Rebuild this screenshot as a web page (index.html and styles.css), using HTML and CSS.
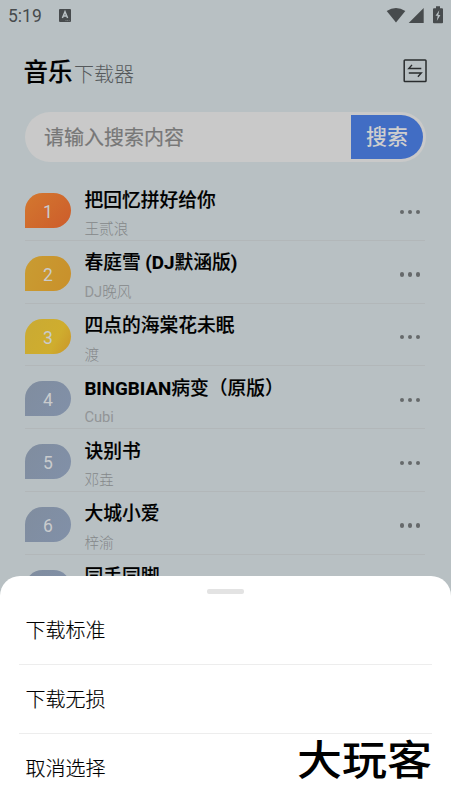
FILE: index.html
```html
<!DOCTYPE html>
<html lang="zh-CN">
<head>
<meta charset="utf-8">
<title>音乐下载器</title>
<link rel="stylesheet" href="styles.css">
</head>
<body>
<div class="phone">
  <div class="status">
    <span class="clock">5:19</span>
    <svg class="app-mark" width="12" height="13" viewBox="0 0 12 13"><rect width="12" height="13" rx="1" fill="#474b4d"/><path d="M3.4 9 6 2.8 8.6 9M4.3 7.1h3.4" fill="none" stroke="#b9c1c4" stroke-width="1.5"/><path d="M6.5 11.6h4" stroke="#8b9193" stroke-width=".8" stroke-dasharray="1 .7"/></svg>
    <svg class="signals" width="58" height="18" viewBox="0 0 58 18" fill="#474b4d"><path d="M.7 5Q10 -1.2 19.3 5L10 16.4Z"/><path d="M37.7 2v15H22.7Z"/><path d="M47 3.2q0-1 1-1h2V.2h4v2h2q1 0 1 1v13.2q0 .8-1 .8h-8q-1 0-1-.8Z"/><path d="m53.3 4.3-3.8 5.5h2.2l-.9 5.2 3.6-6h-2.1Z" fill="#b9c1c4"/></svg>
  </div>
  <header class="header">
    <h1 class="brand">音乐</h1><span class="brand-sub">下载器</span>
    <svg class="swap" width="24" height="24" viewBox="0 0 24 24" fill="none" stroke="#292c2e"><rect x="1.2" y="1" width="21.8" height="21.5" rx=".8" stroke-width="1.5"/><path d="M18.3 9.5H5.8L9 5.9M5.8 14h12.5l-3.4 3.7" stroke-width="1.4"/></svg>
  </header>
  <div class="search"><span class="placeholder">请输入搜索内容</span><span class="search-btn">搜索</span></div>
  <div class="list">
    <div class="row"><span class="rank r1">1</span><div class="song"><div class="title">把回忆拼好给你</div><div class="artist">王贰浪</div></div><span class="more"><i></i><i></i><i></i></span></div>
    <div class="row"><span class="rank r2">2</span><div class="song"><div class="title">春庭雪 <b>(DJ</b>默涵版<b>)</b></div><div class="artist"><span class="latin">DJ</span>晚风</div></div><span class="more"><i></i><i></i><i></i></span></div>
    <div class="row"><span class="rank r3">3</span><div class="song"><div class="title">四点的海棠花未眠</div><div class="artist">渡</div></div><span class="more"><i></i><i></i><i></i></span></div>
    <div class="row"><span class="rank">4</span><div class="song"><div class="title"><b>BINGBIAN</b>病变（原版）</div><div class="artist"><span class="latin">Cubi</span></div></div><span class="more"><i></i><i></i><i></i></span></div>
    <div class="row"><span class="rank">5</span><div class="song"><div class="title">诀别书</div><div class="artist">邓垚</div></div><span class="more"><i></i><i></i><i></i></span></div>
    <div class="row"><span class="rank">6</span><div class="song"><div class="title">大城小爱</div><div class="artist">梓渝</div></div><span class="more"><i></i><i></i><i></i></span></div>
    <div class="row"><span class="rank"></span><div class="song"><div class="title">同手同脚</div></div></div>
  </div>
  <div class="sheet">
    <div class="handle"></div>
    <div class="option">下载标准</div>
    <div class="option">下载无损</div>
    <div class="option">取消选择</div>
    <div class="watermark">大玩客</div>
  </div>
</div>
</body>
</html>
```
FILE: styles.css
```css
* { box-sizing: border-box; }
body { margin: 0; font-family: Roboto, "Noto Sans CJK SC", sans-serif; }
.phone { position: relative; width: 451px; height: 803px; overflow: hidden; background: #b8c0c3; }
.status { display: flex; align-items: center; height: 32px; padding: 0 8px; color: #474b4d; }
.clock { font-size: 17.5px; line-height: 32px; width: 51px; }
.app-mark { margin-top: -1px; }
.signals { margin: -2px -1px 0 auto; }
.header { display: flex; align-items: center; height: 80px; padding: 0 23.5px; }
.brand { margin: 2px 0 0; font-size: 24.5px; font-weight: 500; line-height: 36px; color: #000; -webkit-text-stroke: .2px #000; }
.brand-sub { margin: 5px 0 0 1.5px; font-size: 20px; font-weight: 300; line-height: 30px; color: #55595b; }
.swap { margin: -2px .5px 0 auto; }
.search { display: flex; align-items: center; height: 50px; margin: 0 25px; padding: 0 3px 0 19px; border-radius: 25px; background: #c9c9c9; }
.placeholder { flex: 1; padding-top: 1px; font-size: 20px; line-height: 30px; color: #777; -webkit-text-stroke: .2px #777; }
.search-btn { width: 72px; height: 44px; border-radius: 0 22px 22px 0; background: #416dc4; color: #cecece; font-size: 21px; font-weight: 500; line-height: 45px; text-align: center; }
.list { margin: 16px 26px 0 25px; }
.row { display: flex; height: 62.75px; border-bottom: 1px solid #b2b7b9; }
.rank { width: 46px; height: 35px; margin-top: 15px; border-radius: 18px 18px 18px 0; background: linear-gradient(120deg, #808d9f, #8190a8); color: #c9cbcd; font-size: 17.5px; line-height: 38px; text-align: center; }
.r1 { background: linear-gradient(135deg, #d3782f, #cd5c2b); }
.r2 { background: linear-gradient(110deg, #c99c32, #c9902b); }
.r3 { background: linear-gradient(120deg, #cbab32 20%, #cfad2e 65%, #ca9529); }
.song { flex: 1; margin-left: 13.4px; padding-top: 8.5px; }
.title { font-size: 18.75px; font-weight: 500; line-height: 28px; color: #000; white-space: nowrap; -webkit-text-stroke: .15px #000; }
.title b { font-weight: 700; }
.artist { margin-top: 3.7px; font-size: 14.7px; font-weight: 300; line-height: 22px; color: #85888a; }
.latin { font-weight: 400; color: #929597; }
.more { display: flex; gap: 3.8px; align-items: flex-start; margin: 31.7px 5px 0 0; }
.more i { width: 4.2px; height: 4.2px; border-radius: 50%; background: #66696b; }
.sheet { position: absolute; left: 0; right: 0; bottom: 0; height: 227px; padding: 13px 19px 0; border-radius: 20px 20px 0 0; background: #fff; }
.handle { width: 37px; height: 5px; margin: 0 auto 2px; border-radius: 2px; background: #e3e3e3; }
.option { height: 69.2px; padding: 1px 0 0 6.5px; border-bottom: 1px solid #ededed; font-size: 20px; font-weight: 300; line-height: 69px; color: #000; -webkit-text-stroke: .15px #000; }
.option:nth-last-child(2) { border-bottom: 0; }
.watermark { position: absolute; right: 19px; bottom: 15px; font-family: "Noto Sans CJK SC", sans-serif; font-size: 45px; font-weight: 500; line-height: 60px; color: #000; transform: scaleY(.9); }
```
